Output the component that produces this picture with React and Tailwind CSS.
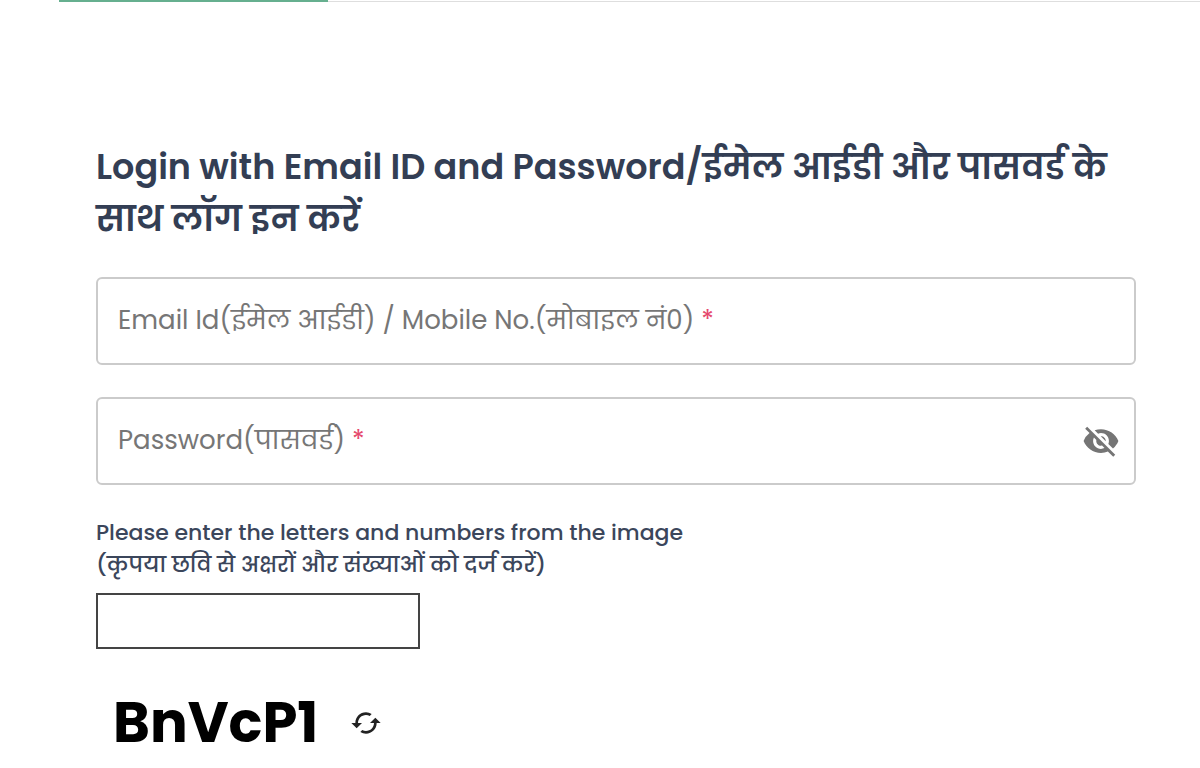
import { useState } from 'react';
import { MdCached, MdVisibility, MdVisibilityOff } from 'react-icons/md';

function Field({ id, label, type = 'text', value, onChange, children }) {
  return (
    <div className="flex h-[88px] items-center rounded-md border-2 border-[#cbcbcb] bg-white pl-5 pr-3.5">
      <label htmlFor={id} className="shrink-0 pb-0.5 text-[26px] leading-10 text-[#767676]">
        {label} <span className="text-[#e5486d]">*</span>
      </label>
      <input
        id={id}
        type={type}
        value={value}
        onChange={onChange}
        required
        className="h-full min-w-0 flex-1 bg-transparent px-3 text-2xl text-[#2f3b52] outline-none"
      />
      {children}
    </div>
  );
}

export default function App() {
  const [email, setEmail] = useState('');
  const [password, setPassword] = useState('');
  const [captcha, setCaptcha] = useState('');
  const [showPassword, setShowPassword] = useState(false);

  return (
    <div className="bg-white font-['Poppins','Noto_Sans',sans-serif]">
      {/* Active tab underline */}
      <div className="flex h-0.5 pl-[59px]">
        <div className="h-full w-[269px] bg-[#66af8f]" />
        <div className="h-px flex-1 self-end bg-[#dedede]" />
      </div>

      <form className="pl-24 pr-16 pt-[139px]" onSubmit={(e) => e.preventDefault()}>
        <h1 className="text-[35px] font-semibold leading-[52px] text-[#333e54]">
          Login with Email ID and Password/ईमेल आईडी और पासवर्ड के साथ लॉग इन करें
        </h1>

        <div className="mt-8 space-y-8">
          <Field
            id="email"
            label="Email Id(ईमेल आईडी) / Mobile No.(मोबाइल नं0)"
            value={email}
            onChange={(e) => setEmail(e.target.value)}
          />
          <Field
            id="password"
            label="Password(पासवर्ड)"
            type={showPassword ? 'text' : 'password'}
            value={password}
            onChange={(e) => setPassword(e.target.value)}
          >
            <button
              type="button"
              aria-label="Toggle password visibility"
              onClick={() => setShowPassword(!showPassword)}
              className="text-[#757575]"
            >
              {showPassword ? <MdVisibility className="size-[38px]" /> : <MdVisibilityOff className="size-[38px]" />}
            </button>
          </Field>
        </div>

        {/* Captcha */}
        <label htmlFor="captcha" className="mt-8 block text-[22px] font-medium leading-8 text-[#3b465b]">
          Please enter the letters and numbers from the image
          <br />
          (कृपया छवि से अक्षरों और संख्याओं को दर्ज करें)
        </label>
        <input
          id="captcha"
          type="text"
          value={captcha}
          onChange={(e) => setCaptcha(e.target.value)}
          className="mt-3 block h-14 w-[324px] border-2 border-[#444] px-3 text-2xl outline-none"
        />
        <div className="mt-8 flex items-center gap-8 pl-[17px]">
          <span className="text-[56px] font-bold leading-[84px] text-black">BnVcP1</span>
          <button type="button" aria-label="Refresh captcha" className="text-[#222]">
            <MdCached className="size-8" />
          </button>
        </div>
      </form>
    </div>
  );
}
